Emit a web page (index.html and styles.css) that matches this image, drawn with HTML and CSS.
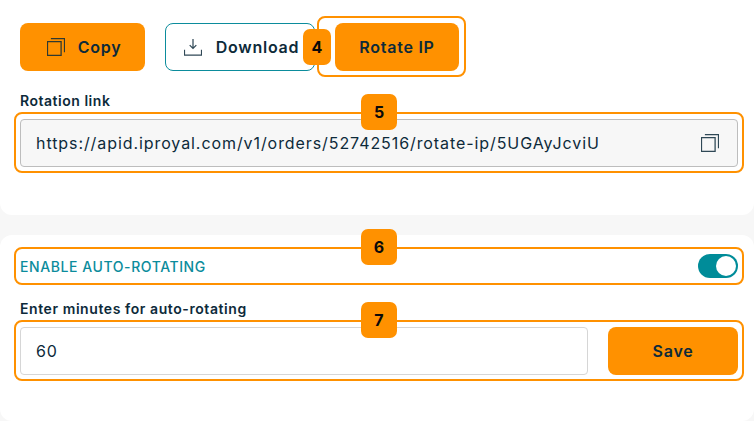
FILE: index.html
```html
<!DOCTYPE html>
<html lang="en">
<head>
<meta charset="utf-8">
<title>Rotation</title>
<link rel="stylesheet" href="styles.css">
</head>
<body>
<main class="page">
  <section class="card card-top">
    <div class="actions">
      <button class="btn btn-primary btn-copy">
        <svg class="icon" viewBox="0.500 1.500 18.500 18"><path d="M1 5h14v14H1z"/><path d="M4.500 2H18.500V16"/></svg>
        <span>Copy</span>
      </button>
      <button class="btn btn-outline">
        <svg class="icon" viewBox="0.500 0.500 19 18"><path d="M10 1v10M6.500 7.500 10 11l3.500-3.500M1 12.500V18h18v-5.500"/></svg>
        <span>Download</span>
      </button>
      <div class="rotate-wrap">
        <button class="btn btn-primary btn-rotate">Rotate IP</button>
        <span class="rotate-frame"></span>
        <span class="badge badge-4">4</span>
      </div>
    </div>
    <label class="field-label label-link">Rotation link</label>
    <div class="frame frame-input">
      <span class="badge badge-center">5</span>
      <div class="input input-readonly">
        <span>https://apid.iproyal.com/v1/orders/52742516/rotate-ip/5UGAyJcviU</span>
        <svg class="icon icon-field" viewBox="0.500 1.500 18.500 18"><path d="M1 5h14v14H1z"/><path d="M4.500 2H18.500V16"/></svg>
      </div>
    </div>
  </section>
  <section class="card card-bottom">
    <div class="frame frame-toggle">
      <span class="badge badge-center">6</span>
      <span class="toggle-label">ENABLE AUTO-ROTATING</span>
      <span class="toggle"><span class="knob"></span></span>
    </div>
    <label class="field-label label-minutes">Enter minutes for auto-rotating</label>
    <div class="frame frame-input frame-save">
      <span class="badge badge-center">7</span>
      <div class="input input-plain">60</div>
      <button class="btn btn-primary btn-save">Save</button>
    </div>
  </section>
</main>
</body>
</html>
```
FILE: styles.css
```css
* { box-sizing: border-box; }
html, body { margin: 0; padding: 0; }
body {
  width: 754px;
  height: 421px;
  overflow: hidden;
  background: #f7f7f7;
  font-family: "Inter", "Liberation Sans", sans-serif;
  color: #0d2a3a;
}
.page { display: flex; flex-direction: column; gap: 20px; }
.card { background: #fff; }
.card-top {
  height: 215px;
  padding-top: 23px;
  border-radius: 0 0 12px 12px;
}
.card-bottom {
  height: 186px;
  padding-top: 12px;
  border-radius: 12px;
}
.actions { display: flex; gap: 20px; padding-left: 20px; }
.btn {
  height: 48px;
  border-radius: 8px;
  border: 0;
  font-family: inherit;
  font-size: 16px;
  font-weight: 600;
  letter-spacing: 0.75px;
  color: #0d2a3a;
  display: flex;
  align-items: center;
  justify-content: center;
  padding: 0;
}
.btn-primary { background: #ff9100; }
.btn-outline { background: #fff; border: 1px solid #0b8c9c; width: 150px; gap: 14px; padding-left: 3px; }
.btn-copy { width: 125px; gap: 13px; padding-left: 3px; }
.btn-rotate { width: 124px; }
.btn-save { width: 130px; flex: none; margin-left: 20px; }
.icon {
  width: 18px;
  height: 18px;
  fill: none;
  stroke: #0d2a3a;
  stroke-width: 1.300;
  opacity: .85;
}
.rotate-wrap { position: relative; }
.rotate-frame {
  position: absolute;
  left: -18px; right: -7px; top: -7px; bottom: -6px;
  border: 2px solid #ff9100;
  border-radius: 8px;
  pointer-events: none;
}
.badge {
  position: absolute;
  height: 36px;
  width: 36px;
  border-radius: 7px;
  background: #ff9100;
  color: #0a0a0a;
  font-size: 16px;
  font-weight: 700;
  display: flex;
  align-items: center;
  justify-content: center;
}
.badge-4 { left: -32px; top: 6px; width: 28px; }
.badge-center { left: 345px; top: -20px; }
.field-label {
  display: block;
  margin-left: 20px;
  font-size: 14px;
  font-weight: 600;
  line-height: 16px;
  letter-spacing: 0.52px;
}
.label-link { margin-top: 22px; }
.label-minutes { margin-top: 16px; letter-spacing: 0.58px; }
.frame {
  position: relative;
  margin: 0 10px 0 14px;
  border: 2px solid #ff9100;
  border-radius: 8px;
}
.frame-input { height: 61px; margin-top: 3px; padding: 5px 4px 4px; display: flex; }
.frame-toggle {
  height: 38px;
  display: flex;
  align-items: center;
  justify-content: space-between;
  padding: 0 4px;
}
.input {
  flex: 1;
  height: 48px;
  border-radius: 4px;
  display: flex;
  align-items: center;
  font-size: 16px;
  letter-spacing: 0.92px;
  padding-left: 15px;
}
.input-readonly {
  background: #f7f7f7;
  border: 1px solid #bdbdbd;
  justify-content: space-between;
  padding-right: 18px;
}
.input-plain { background: #fff; border: 1px solid #d6d6d6; }
.icon-field { width: 18px; height: 18px; }
.toggle-label { color: #0b8c9c; font-size: 14px; font-weight: 500; letter-spacing: 0.58px; }
.toggle {
  width: 40px;
  height: 24px;
  background: #008c99;
  border-radius: 12px;
  padding: 2px;
  display: flex;
  justify-content: flex-end;
}
.knob { width: 20px; height: 20px; background: #fff; border-radius: 50%; }
```
